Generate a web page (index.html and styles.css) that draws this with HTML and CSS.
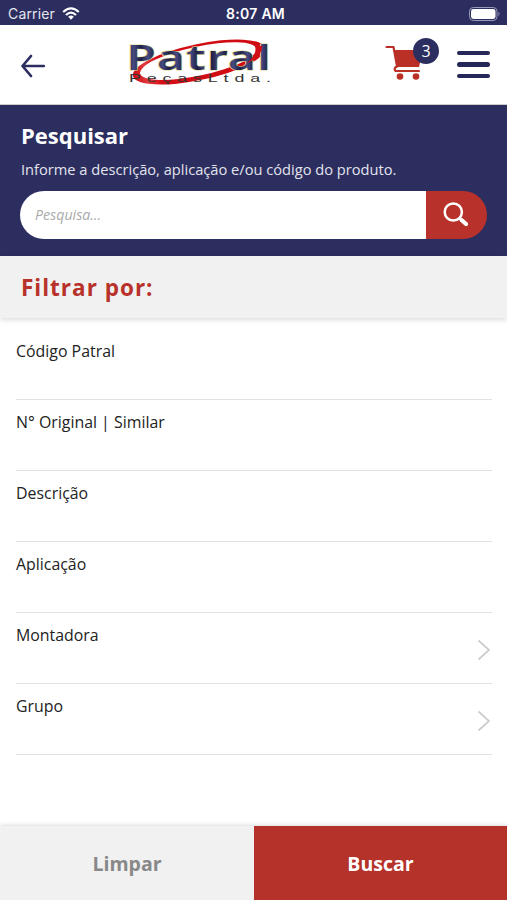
FILE: index.html
```html
<!DOCTYPE html>
<html lang="pt-BR">
<head>
<meta charset="utf-8">
<title>Patral Peças</title>
<link rel="stylesheet" href="styles.css">
</head>
<body>
<div class="screen">
  <div class="status">
    <div class="carrier">Carrier
      <svg width="18" height="13" viewBox="0 0 18 13"><g fill="none" stroke="#fff" stroke-width="2.2"><path d="M1.2 5Q9-2.2 16.8 5M4 8Q9 3.2 14 8"/></g><path d="M6.2 9.7Q9 7.2 11.8 9.7L9 12.7Z" fill="#fff"/></svg>
    </div>
    <div class="time">8:07 AM</div>
    <svg class="battery" width="32" height="14" viewBox="0 0 32 14"><rect x=".5" y=".5" width="27.5" height="13" rx="3.8" fill="none" stroke="#9a9bb8"/><rect x="2" y="2" width="24.5" height="10" rx="2.4" fill="#fff"/><path d="M29.5 4.8q2 2.2 0 4.4z" fill="#9a9bb8"/></svg>
  </div>
  <header class="header">
    <svg class="back" width="26" height="24" viewBox="0 0 26 24"><path d="M11 2L2.500 12l8.500 10M3 12h20.800" fill="none" stroke="#2c2e60" stroke-width="2.7" stroke-linecap="round" stroke-linejoin="round"/></svg>
    <svg class="logo" width="160" height="64" viewBox="0 0 160 64">
      <defs>
        <linearGradient id="metal" gradientUnits="userSpaceOnUse" x1="0" y1="0" x2="5" y2="0" spreadMethod="reflect"><stop offset="0" stop-color="#1d1f45"/><stop offset="1" stop-color="#464a80"/></linearGradient>
        <linearGradient id="ring" x1="0" y1="0" x2="1" y2="0"><stop offset="0" stop-color="#c90b12"/><stop offset=".1" stop-color="#e23a3e"/><stop offset=".2" stop-color="#d40e15"/><stop offset="1" stop-color="#cf0a10"/></linearGradient>
      </defs>
      <g transform="rotate(-12 79 32)"><path fill="url(#ring)" fill-rule="evenodd" d="M11.500 32a67.500 18 0 1 0 135 0a67.500 18 0 1 0-135 0M19 31a59.500 14.500 0 1 1 119 0a59.500 14.500 0 1 1-119 0"/></g>
      <g transform="translate(6.500 40) scale(1.420 1)"><text class="logo-name" x="0" y="0" textLength="101.500">Patral</text></g>
      <path d="M142 16C143 22 136 29 126 34C132 29 137 23 135 16Z" fill="#d01016"/>
      <g transform="translate(9 51.500) scale(1.700 1)"><text class="logo-sub" x="0" y="0" textLength="83.500">PeçasLtda.</text></g>
    </svg>
    <div class="cart">
      <svg width="38" height="38" viewBox="0 0 38 38"><g fill="none" stroke="#bb3026" stroke-linecap="round" stroke-linejoin="round"><path d="M1.500 3h7l3.700 20h-1.500q-2 2.500 0 4H34" stroke-width="2.200"/></g><path d="M9 6h29l-4 17H12.200Z" fill="#bb3026"/><path d="M12 24.500h22" stroke="#fff" stroke-width="1.800"/><circle cx="15" cy="32.500" r="3.300" fill="#bb3026"/><circle cx="31" cy="32.500" r="3.300" fill="#bb3026"/></svg>
      <span class="badge">3</span>
    </div>
    <div class="menu"><i></i><i></i><i></i></div>
  </header>
  <section class="search">
    <h1>Pesquisar</h1>
    <p>Informe a descrição, aplicação e/ou código do produto.</p>
    <div class="searchbar">
      <div class="input">Pesquisa...</div>
      <div class="go"><svg width="26" height="26" viewBox="0 0 26 26"><circle cx="10.300" cy="10" r="8.600" fill="none" stroke="#fff" stroke-width="2.500"/><path d="M16.500 16l2 2" stroke="#fff" stroke-width="2.800"/><path d="M18.500 18l4.500 4" stroke="#fff" stroke-width="4.200" stroke-linecap="round"/></svg></div>
    </div>
  </section>
  <h2 class="filter">Filtrar por:</h2>
  <main class="fields">
    <div class="field"><span>Código Patral</span></div>
    <div class="field"><span>N° Original | Similar</span></div>
    <div class="field"><span>Descrição</span></div>
    <div class="field"><span>Aplicação</span></div>
    <div class="field"><span>Montadora</span><svg class="chev" width="14" height="22" viewBox="0 0 14 22"><path d="M1.500 1.500L12 11 1.500 20.500"/></svg></div>
    <div class="field"><span>Grupo</span><svg class="chev" width="14" height="22" viewBox="0 0 14 22"><path d="M1.500 1.500L12 11 1.500 20.500"/></svg></div>
  </main>
  <footer class="actions"><div class="clear"><span>Limpar</span></div><div class="submit"><span>Buscar</span></div></footer>
</div>
</body>
</html>
```
FILE: styles.css
```css
* { box-sizing: border-box; }
body { margin: 0; background: #fff; font-family: "Open Sans", sans-serif; }
h1, h2, p { margin: 0; }
svg { display: block; flex: none; }
.screen { height: 900px; display: flex; flex-direction: column; overflow: hidden; }
.status { height: 25px; flex: none; background: #2c2e60; color: #fff; display: grid; grid-template-columns: 1fr auto 1fr; align-items: center; padding: 2px 4px 0 8px; font-family: Inter, sans-serif; font-size: 14px; line-height: 20px; }
.carrier { display: flex; align-items: center; gap: 7px; color: #e6e6ee; letter-spacing: .15px; }
.time { font-weight: 600; font-size: 14px; letter-spacing: .3px; }
.battery { justify-self: end; margin-right: 2px; }
.header { height: 80px; flex: none; display: flex; border-bottom: 1px solid #ccc; }
.back { margin: 29px 0 0 20px; }
.logo { margin: 5px 0 0 74px; }
.logo-name { font: 600 33.500px "Noto Sans", sans-serif; fill: url(#metal); stroke: #dfd98a; stroke-width: 1.200px; paint-order: stroke; }
.logo-sub { font: 10.500px "Liberation Sans", sans-serif; fill: #333; }
.cart { position: relative; margin: 19px 0 0 105px; }
.badge { position: absolute; left: 28px; top: -6px; width: 26px; height: 26px; border-radius: 50%; background: #2c2e60; color: #fff; font-size: 16px; line-height: 26px; text-align: center; }
.menu { display: flex; flex-direction: column; gap: 7px; margin: 26px 0 0 34px; }
.menu i { width: 33px; height: 4.300px; border-radius: 3px; background: #252759; }
.search { height: 151px; flex: none; background: #2c2e60; color: #fff; padding: 15px 20px 0; }
h1 { font-size: 22px; line-height: 30px; padding-left: 1px; }
.search p { font-size: 14.650px; line-height: 20px; margin-top: 9px; padding-left: 1px; color: #e3e3ec; white-space: nowrap; }
.searchbar { margin-top: 12px; height: 48px; width: 467px; border-radius: 24px; overflow: hidden; display: flex; }
.input { width: 406px; background: #fff; color: #aaa; font-style: italic; font-size: 14.200px; line-height: 48px; padding-left: 15px; }
.go { flex: 1; background: #b8322b; padding: 11px 0 0 17px; }
.filter { height: 62px; flex: none; background: #f1f1f1; color: #b8322b; font-size: 22.500px; letter-spacing: 1px; line-height: 63px; padding-left: 21px; box-shadow: 0 2px 5px rgba(0,0,0,.14); }
.fields { padding: 11px 15px 0 16px; }
.field { height: 71px; border-bottom: 1px solid #e2e2e2; display: flex; justify-content: space-between; font-size: 15.900px; line-height: 24px; color: #222; padding-top: 10px; }
.chev { margin: 16px 1px 0 0; fill: none; stroke: #ccc; stroke-width: 1.700; }
.actions { margin-top: auto; height: 74px; flex: none; display: flex; font-weight: 700; font-size: 19.500px; line-height: 75px; text-align: center; box-shadow: 0 -1px 4px rgba(0,0,0,.14); }
.clear { width: 254px; background: #f1f1f1; color: #888; }
.submit { flex: 1; background: #b5322a; color: #fff; }
```
